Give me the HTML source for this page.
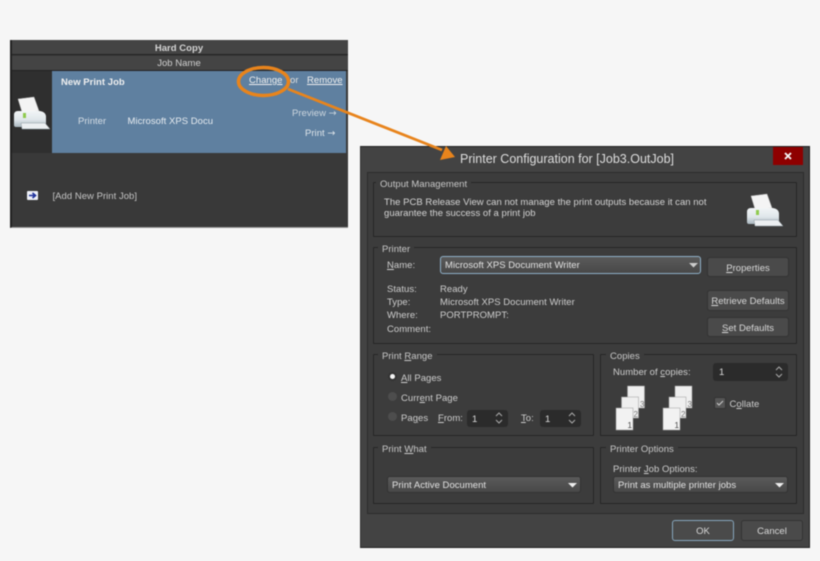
<!DOCTYPE html>
<html><head><meta charset="utf-8">
<style>
html,body{margin:0;padding:0;background:#f6f6f6}
#r{position:relative;width:820px;height:561px;overflow:hidden;background:#f6f6f6;font-family:"Liberation Sans",sans-serif;font-size:9.5px;letter-spacing:.03px;color:#cdcdcd;filter:blur(.4px)}
#r div,#r svg{position:absolute;box-sizing:border-box}
.t{white-space:nowrap;line-height:12px;margin-top:1px}
.g{border:1px solid #262626;border-radius:1px}
.l{background:#3c3c3c;padding:1px 4px 0;white-space:nowrap;line-height:12px;color:#c8c8c8;height:13px}
.b{background:#4a4a4a;border:1px solid #333;border-radius:3px;text-align:center;color:#d8d8d8;white-space:nowrap;padding-top:1px}
.s{background:#2b2b2b;border-radius:3px;color:#ddd;white-space:nowrap}
.c{background:linear-gradient(#5a5a5a,#484848);border:1px solid #333;border-radius:3px;color:#e2e2e2;white-space:nowrap}
u{text-underline-offset:1px}
.a{font-family:"DejaVu Sans",sans-serif;font-size:9.5px}
</style></head><body>
<div id="r">
<!-- left panel -->
<div style="left:10px;top:40px;width:338px;height:188px;background:#393939;border-left:2px solid #222;border-bottom:1px solid #999"></div>
<div style="left:12px;top:40px;width:336px;height:15px;background:#444;border-bottom:1px solid #222"></div>
<div style="left:12px;top:56px;width:336px;height:15px;background:#444;border-bottom:1px solid #222"></div>
<div class="t" style="left:12px;top:42px;width:334px;text-align:center;font-weight:bold;color:#d4d4d4">Hard Copy</div>
<div class="t" style="left:12px;top:57px;width:334px;text-align:center;color:#d0d0d0">Job Name</div>
<div style="left:12px;top:71px;width:40px;height:82px;background:#2f2f2f"></div>
<div style="left:52px;top:71px;width:294px;height:82px;background:#5f80a0"></div>
<div class="t" style="left:61px;top:76px;font-weight:bold;color:#f0f0f0">New Print Job</div>
<div class="t" style="left:78px;top:115px;color:#d5dde5">Printer</div>
<div class="t" style="left:127.5px;top:115px;color:#e6ebf0">Microsoft XPS Docu</div>
<div class="t" style="left:249px;top:74px;color:#f0f0f0"><u>Change</u></div>
<div class="t" style="left:290px;top:74px;color:#e0e0e0">or</div>
<div class="t" style="left:307px;top:74px;color:#f0f0f0"><u>Remove</u></div>
<div class="t" style="left:292px;top:107px;color:#cdd6de">Preview <span class="a">→</span></div>
<div class="t" style="left:305px;top:127px;color:#dfe5ea">Print <span class="a">→</span></div>
<svg style="left:13px;top:96px" width="38" height="35" viewBox="0 0 38 35">
<path d="M5 3 L21 1 L26 15 L9 16Z" fill="#f4f4f4" stroke="#bbb" stroke-width=".5"/>
<path d="M1 19 Q1 15 5 15 L27 15 Q33 16 33 21 L33 31 L3 31 Q1 31 1 29Z" fill="url(#gr)"/>
<rect x="10" y="17" width="3" height="5" fill="#8fca4e"/>
<path d="M8 27 H32 L37 33 H9Z" fill="#eceff1" stroke="#8f9aa2" stroke-width=".5"/>
<defs><linearGradient id="gr" x1="0" y1="0" x2="0" y2="1"><stop offset="0" stop-color="#f2f5f6"/><stop offset=".55" stop-color="#dfe6ea"/><stop offset="1" stop-color="#a9b6be"/></linearGradient></defs>
</svg>
<div style="left:27px;top:191px;width:11px;height:9px;background:#eef0f8;border-radius:1px"></div>
<svg style="left:28px;top:192px" width="9" height="7" viewBox="0 0 9 7"><path d="M1 3.5H6M4.5 1L7.5 3.5L4.5 6" stroke="#1c2f9a" stroke-width="1.6" fill="none"/></svg>
<div class="t" style="left:52.5px;top:190px;color:#c4c4c4">[Add New Print Job]</div>

<!-- dialog -->
<div style="left:360px;top:146px;width:450px;height:402px;background:#434343;border:1px solid #222;border-left:1px solid #333"></div>
<div class="t" style="left:460px;top:150px;font-size:12.5px;letter-spacing:0;line-height:16px;color:#dedede">Printer Configuration for [Job3.OutJob]</div>
<div style="left:773px;top:147px;width:30px;height:18px;background:#8e0000"></div>
<svg style="left:784px;top:152px" width="8" height="8" viewBox="0 0 8 8"><path d="M1 1L7 7M7 1L1 7" stroke="#f4f4f4" stroke-width="1.9"/></svg>
<div style="left:367px;top:172px;width:437px;height:342px;background:#3c3c3c;border:1px solid #2c2c2c"></div>

<div class="g" style="left:373px;top:182px;width:424px;height:55px"></div>
<div class="l" style="left:376px;top:178px">Output Management</div>
<div class="t" style="left:384px;top:195.500px;width:340px;line-height:11px;color:#d4d4d4">The PCB Release View can not manage the print outputs because it can not<br>guarantee the success of a print job</div>
<svg style="left:746px;top:193px" width="38" height="35" viewBox="0 0 38 35">
<path d="M5 3 L21 1 L26 15 L9 16Z" fill="#f4f4f4" stroke="#bbb" stroke-width=".5"/>
<path d="M1 19 Q1 15 5 15 L27 15 Q33 16 33 21 L33 31 L3 31 Q1 31 1 29Z" fill="url(#gr)"/>
<rect x="10" y="17" width="3" height="5" fill="#8fca4e"/>
<path d="M8 27 H32 L37 33 H9Z" fill="#eceff1" stroke="#8f9aa2" stroke-width=".5"/>
</svg>

<div class="g" style="left:373px;top:247px;width:424px;height:97px"></div>
<div class="l" style="left:378px;top:243px">Printer</div>
<div class="t" style="left:387px;top:259px"><u>N</u>ame:</div>
<div class="c" style="left:440px;top:256px;width:261px;height:18px;border:1px solid #8fb0c8;border-radius:3px;padding:3px 4px 0;line-height:12px">Microsoft XPS Document Writer</div>
<svg style="left:689px;top:263px" width="9" height="5"><path d="M0 0H9L4.500 4.500Z" fill="#ccc"/></svg>
<div class="b" style="left:707px;top:257px;width:82px;height:20px;line-height:19px"><u>P</u>roperties</div>
<div class="t" style="left:387px;top:283px">Status:</div><div class="t" style="left:440px;top:283px">Ready</div>
<div class="t" style="left:387px;top:296px">Type:</div><div class="t" style="left:440px;top:296px">Microsoft XPS Document Writer</div>
<div class="t" style="left:387px;top:309px">Where:</div><div class="t" style="left:440px;top:309px">PORTPROMPT:</div>
<div class="t" style="left:387px;top:323px">Comment:</div>
<div class="b" style="left:707px;top:290px;width:82px;height:21px;line-height:20px"><u>R</u>etrieve Defaults</div>
<div class="b" style="left:707px;top:317px;width:82px;height:20px;line-height:19px"><u>S</u>et Defaults</div>

<div class="g" style="left:373px;top:354px;width:221px;height:82px"></div>
<div class="l" style="left:378px;top:350px">Print <u>R</u>ange</div>
<div style="left:388px;top:372px;width:9px;height:9px;border-radius:50%;background:#333"></div>
<div style="left:390px;top:374px;width:5px;height:5px;border-radius:50%;background:#f2f2f2"></div>
<div class="t" style="left:401px;top:372px"><u>A</u>ll Pages</div>
<div style="left:388px;top:392px;width:9px;height:9px;border-radius:50%;background:#4d4d4d"></div>
<div class="t" style="left:401px;top:392px">Curr<u>e</u>nt Page</div>
<div style="left:388px;top:412px;width:9px;height:9px;border-radius:50%;background:#4d4d4d"></div>
<div class="t" style="left:401px;top:412px">Pa<u>g</u>es</div>
<div class="t" style="left:438px;top:412px"><u>F</u>rom:</div>
<div class="s" style="left:467px;top:410px;width:41px;height:17px;padding:4px 5px 0;line-height:11px">1</div>
<div class="t" style="left:521px;top:412px"><u>T</u>o:</div>
<div class="s" style="left:540px;top:410px;width:41px;height:17px;padding:4px 5px 0;line-height:11px">1</div>

<div class="g" style="left:600px;top:354px;width:197px;height:82px"></div>
<div class="l" style="left:606px;top:350px">Copies</div>
<div class="t" style="left:613px;top:366px">Number of <u>c</u>opies:</div>
<div class="s" style="left:713px;top:363px;width:75px;height:18px;padding:4px 6px 0;line-height:12px">1</div>
<svg style="left:495px;top:411px" width="8" height="14" viewBox="0 0 8 14"><path d="M1 5L4 2L7 5M1 9L4 12L7 9" stroke="#aaa" fill="none"/></svg>
<svg style="left:568px;top:411px" width="8" height="14" viewBox="0 0 8 14"><path d="M1 5L4 2L7 5M1 9L4 12L7 9" stroke="#aaa" fill="none"/></svg>
<svg style="left:775px;top:365px" width="8" height="14" viewBox="0 0 8 14"><path d="M1 5L4 2L7 5M1 9L4 12L7 9" stroke="#aaa" fill="none"/></svg>

<svg style="left:615px;top:385px" width="90" height="50" viewBox="0 0 90 50" font-family="Liberation Sans" font-size="8">
<rect x="12.500" y="1" width="17" height="22" fill="#efefef" stroke="#999" stroke-width=".5"/><text x="25" y="22" fill="#777">3</text>
<rect x="6.500" y="12" width="17" height="21" fill="#efefef" stroke="#999" stroke-width=".5"/><text x="18.500" y="32" fill="#777">2</text>
<rect x="1" y="23" width="17" height="22" fill="#f2f2f2" stroke="#999" stroke-width=".5"/><text x="12.500" y="43" fill="#444">1</text>
<rect x="60" y="1" width="17" height="22" fill="#efefef" stroke="#999" stroke-width=".5"/><text x="72.500" y="22" fill="#777">3</text>
<rect x="54" y="12" width="17" height="21" fill="#efefef" stroke="#999" stroke-width=".5"/><text x="66" y="32" fill="#777">2</text>
<rect x="48" y="23" width="17" height="22" fill="#f2f2f2" stroke="#999" stroke-width=".5"/><text x="59.500" y="43" fill="#444">1</text>
</svg>
<div style="left:714px;top:397px;width:12px;height:12px;background:#555;border:1px solid #333;border-radius:2px"></div>
<svg style="left:716px;top:399px" width="8" height="8"><path d="M1 4L3 6L7 2" stroke="#ccc" fill="none"/></svg>
<div class="t" style="left:729.500px;top:398px">C<u>o</u>llate</div>

<div class="g" style="left:373px;top:447px;width:221px;height:57px"></div>
<div class="l" style="left:378px;top:443px">Print <u>W</u>hat</div>
<div class="c" style="left:387px;top:476px;width:194px;height:17px;padding:3px 4px 0;line-height:12px">Print Active Document</div>
<svg style="left:568px;top:483px" width="9" height="5"><path d="M0 0H9L4.500 4.500Z" fill="#eee"/></svg>

<div class="g" style="left:600px;top:447px;width:197px;height:57px"></div>
<div class="l" style="left:606px;top:443px">Printer Options</div>
<div class="t" style="left:613px;top:463px">Printer <u>J</u>ob Options:</div>
<div class="c" style="left:613px;top:476px;width:175px;height:17px;padding:3px 4px 0;line-height:12px">Print as multiple printer jobs</div>
<svg style="left:775px;top:483px" width="9" height="5"><path d="M0 0H9L4.500 4.500Z" fill="#eee"/></svg>

<div class="b" style="left:672px;top:520px;width:62px;height:21px;line-height:20px;border:1px solid #86a6bd;border-radius:3px">OK</div>
<div class="b" style="left:741px;top:520px;width:62px;height:21px;line-height:20px">Cancel</div>

<!-- annotation -->
<svg style="left:0;top:0" width="820" height="561" viewBox="0 0 820 561">
<ellipse cx="263.500" cy="81.500" rx="25" ry="14" fill="none" stroke="#e8841c" stroke-width="3.500"/>
<path d="M288 89L442 150" stroke="#e8841c" stroke-width="2.800" fill="none"/>
<path d="M455 157L440 160L446 146Z" fill="#e8841c"/>
</svg>
</div>
</body></html>
